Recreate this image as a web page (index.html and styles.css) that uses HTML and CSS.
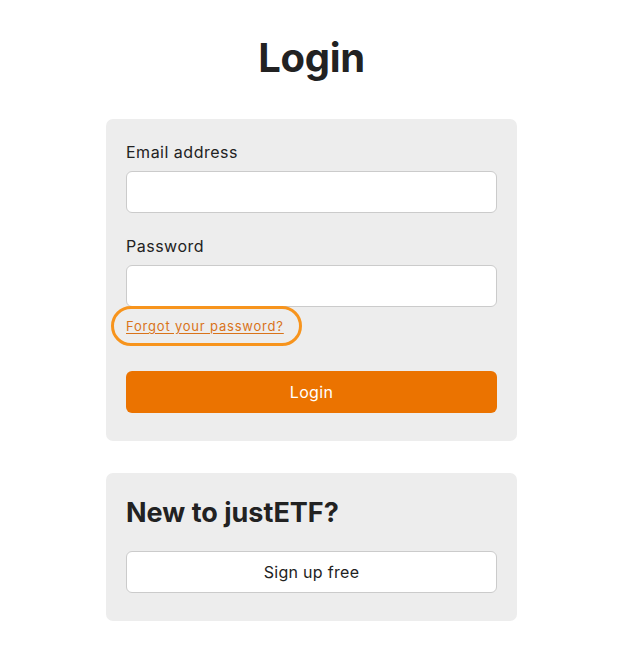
FILE: index.html
```html
<!DOCTYPE html>
<html>
<head>
<meta charset="utf-8">
<link rel="stylesheet" href="styles.css">
</head>
<body>
<main class="page">
  <h1 class="title">Login</h1>
  <form class="card login-card">
    <label class="label" for="email">Email address</label>
    <input class="input" id="email" type="email">
    <label class="label label-pw" for="pw">Password</label>
    <input class="input" id="pw" type="password">
    <div class="forgot-row">
      <span class="forgot-ring"><a class="forgot" href="#">Forgot your password?</a></span>
    </div>
    <button class="btn-primary" type="button">Login</button>
  </form>
  <section class="card signup-card">
    <h2 class="subtitle">New to justETF?</h2>
    <button class="btn-secondary" type="button">Sign up free</button>
  </section>
</main>
</body>
</html>
```

FILE: styles.css
```css
* { box-sizing: border-box; }
html, body { margin: 0; padding: 0; background: #fff; }
body {
  font-family: "Inter", "Noto Sans", sans-serif;
  color: #222;
}
.page {
  width: 411px;
  margin-left: 106px;
  display: flex;
  flex-direction: column;
}
.title {
  margin: 33px 0 0;
  text-align: center;
  font-size: 40px;
  line-height: 50px;
  font-weight: 700;
  color: #222;
  letter-spacing: -0.3px;
}
.card {
  background: #ededed;
  border-radius: 7px;
  padding: 20px 20px;
  display: flex;
  flex-direction: column;
}
.login-card {
  margin-top: 36px;
  padding-top: 23px;
  padding-bottom: 28px;
}
.label {
  font-size: 16px;
  line-height: 20px;
  color: #222;
  margin-bottom: 9px;
  letter-spacing: 0.5px;
}
.label-pw { margin-top: 23px; }
.input {
  height: 42px;
  border: 1px solid #cbcbcb;
  border-radius: 6px;
  background: #fff;
  font: inherit;
}
.forgot-row {
  display: flex;
  margin-left: -15px;
  margin-top: -1px;
}
.forgot-ring {
  display: inline-flex;
  align-items: center;
  border: 3px solid #f7941d;
  border-radius: 22px;
  padding: 0 15px 0 12px;
  height: 40px;
}
.forgot {
  color: #d9731a;
  font-size: 13px;
  line-height: 16px;
  letter-spacing: 0.8px;
  text-decoration: underline;
  text-underline-offset: 2px;
}
.btn-primary {
  margin-top: 25px;
  height: 42px;
  border: none;
  border-radius: 6px;
  background: #eb7300;
  color: #fff;
  font: inherit;
  font-size: 16px;
  letter-spacing: 0.3px;
}
.signup-card {
  margin-top: 32px;
  padding-top: 22px;
  padding-bottom: 28px;
}
.subtitle {
  margin: 0;
  font-size: 27px;
  line-height: 36px;
  font-weight: 700;
  color: #222;
}
.btn-secondary {
  margin-top: 20px;
  height: 42px;
  border: 1px solid #cbcbcb;
  border-radius: 6px;
  background: #fff;
  color: #222;
  font: inherit;
  font-size: 16px;
  letter-spacing: 0.3px;
}
```
